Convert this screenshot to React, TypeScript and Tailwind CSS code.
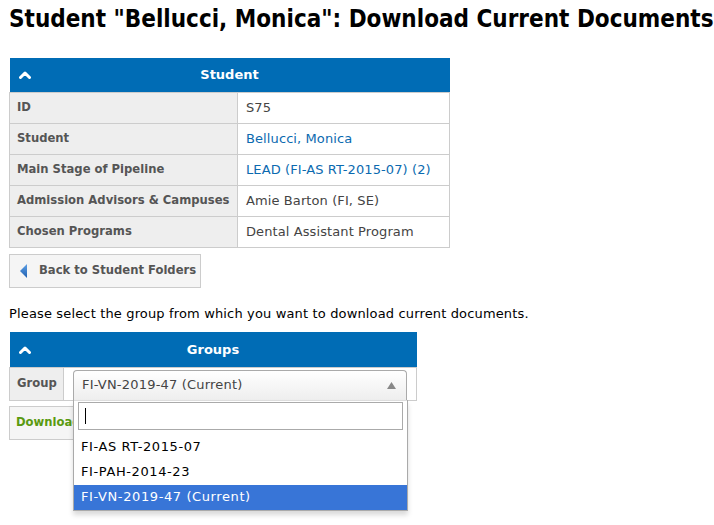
const student = [
  { label: 'ID', value: 'S75' },
  { label: 'Student', value: 'Bellucci, Monica', link: true },
  { label: 'Main Stage of Pipeline', value: 'LEAD (FI-AS RT-2015-07) (2)', link: true },
  { label: 'Admission Advisors & Campuses', value: 'Amie Barton (FI, SE)' },
  { label: 'Chosen Programs', value: 'Dental Assistant Program' },
];

const groups = ['FI-AS RT-2015-07', 'FI-PAH-2014-23', 'FI-VN-2019-47 (Current)'];

const Caret = () => (
  <svg width="12" height="8" viewBox="0 0 12 8" className="block">
    <path d="M1.5 6.5 L6 2 L10.5 6.5" fill="none" stroke="#fff" strokeWidth="3" strokeLinecap="round" strokeLinejoin="round" />
  </svg>
);

const App = () => {
  return (
    <div className="min-h-screen bg-white px-[9px] pt-[5px] text-[13px] text-[#333] font-['DejaVu_Sans',Verdana,sans-serif]">
      <h1 className="text-[24px] leading-[28px] font-bold text-black font-['DejaVu_Sans_Condensed','DejaVu_Sans',sans-serif] whitespace-nowrap">
        Student "Bellucci, Monica": Download Current Documents
      </h1>

      {/* Student table */}
      <table className="mt-[25px] w-[441px] table-fixed border-collapse">
        <colgroup>
          <col className="w-[228px]" />
          <col />
        </colgroup>
        <thead>
          <tr>
            <th colSpan={2} className="h-[34px] bg-[#006cb5] text-white font-bold relative p-0">
              <span className="absolute left-[9px] top-[13px]"><Caret /></span>
              Student
            </th>
          </tr>
        </thead>
        <tbody>
          {student.map((row) => (
            <tr key={row.label} className="h-[31px]">
              <td className="bg-[#eeeeee] border border-[#cccccc] px-[7px] pt-px font-bold text-[#555] text-[11.6px] whitespace-nowrap">
                {row.label}
              </td>
              <td className={`border border-[#cccccc] px-[8px] whitespace-nowrap tracking-[0.1px] ${row.link ? 'text-[#0b6ab0]' : 'text-[#444]'}`}>
                {row.value}
              </td>
            </tr>
          ))}
        </tbody>
      </table>

      <button className="mt-[6px] h-[34px] w-[192px] flex items-center gap-[12px] px-[10px] bg-[#f5f5f5] border border-[#cccccc] font-bold text-[#555] text-[11.6px] whitespace-nowrap">
        <svg width="7" height="14" viewBox="0 0 7 14" className="shrink-0">
          <defs>
            <linearGradient id="tri" x1="0" y1="0" x2="0" y2="1">
              <stop offset="0" stopColor="#5ea0e6" />
              <stop offset="1" stopColor="#1f5fb0" />
            </linearGradient>
          </defs>
          <path d="M7 0 L0 7 L7 14 Z" fill="url(#tri)" />
        </svg>
        Back to Student Folders
      </button>

      <p className="mt-[16px] text-black tracking-[0.15px]">Please select the group from which you want to download current documents.</p>

      {/* Groups table */}
      <table className="mt-[9px] w-[408px] table-fixed border-collapse">
        <colgroup>
          <col className="w-[54px]" />
          <col />
        </colgroup>
        <thead>
          <tr>
            <th colSpan={2} className="h-[35px] bg-[#006cb5] text-white font-bold relative p-0">
              <span className="absolute left-[9px] top-[14px]"><Caret /></span>
              Groups
            </th>
          </tr>
        </thead>
        <tbody>
          <tr className="h-[31px]">
            <td className="bg-[#eeeeee] border border-[#cccccc] px-[7px] pt-px font-bold text-[#555] text-[11.6px]">Group</td>
            <td className="border border-[#cccccc] p-0 relative">
              <div className="mx-[9px] h-[30px] mt-[2px] rounded-t-[4px] border border-b-0 border-[#aaaaaa] bg-gradient-to-b from-[#ffffff] to-[#eeeeee] flex items-center justify-between pl-[8px] pr-[10px] text-[#444] tracking-[0.2px]">
                <span>FI-VN-2019-47 (Current)</span>
                <svg width="9" height="7" viewBox="0 0 9 7"><path d="M0 7 L4.5 0 L9 7 Z" fill="#888" /></svg>
              </div>
              {/* dropdown */}
              <div className="absolute left-[9px] right-[8px] top-[32px] z-10 bg-white border border-t-0 border-[#aaaaaa] shadow-[0_4px_5px_rgba(0,0,0,0.15)]">
                <div className="px-[4px] pt-[1px] pb-[4px] border-t border-[#dddddd]">
                  <div className="h-[28px] border border-[#aaaaaa] flex items-center px-[6px]">
                    <span className="w-px h-[16px] bg-black" />
                  </div>
                </div>
                {groups.map((g, i) => (
                  <div
                    key={g}
                    className={`h-[25px] flex items-center px-[7px] tracking-[0.6px] ${i === 0 ? 'mt-[1px]' : ''} ${i === groups.length - 1 ? 'bg-[#3875d7] text-white' : 'text-black'}`}
                  >
                    {g}
                  </div>
                ))}
              </div>
            </td>
          </tr>
        </tbody>
      </table>

      <button className="mt-[5px] h-[34px] w-[130px] flex items-center px-[6px] bg-[#f5f5f5] border border-[#cccccc] font-bold text-[#5a9a10] text-[11.6px]">
        Download
      </button>
    </div>
  );
};

export default App;
